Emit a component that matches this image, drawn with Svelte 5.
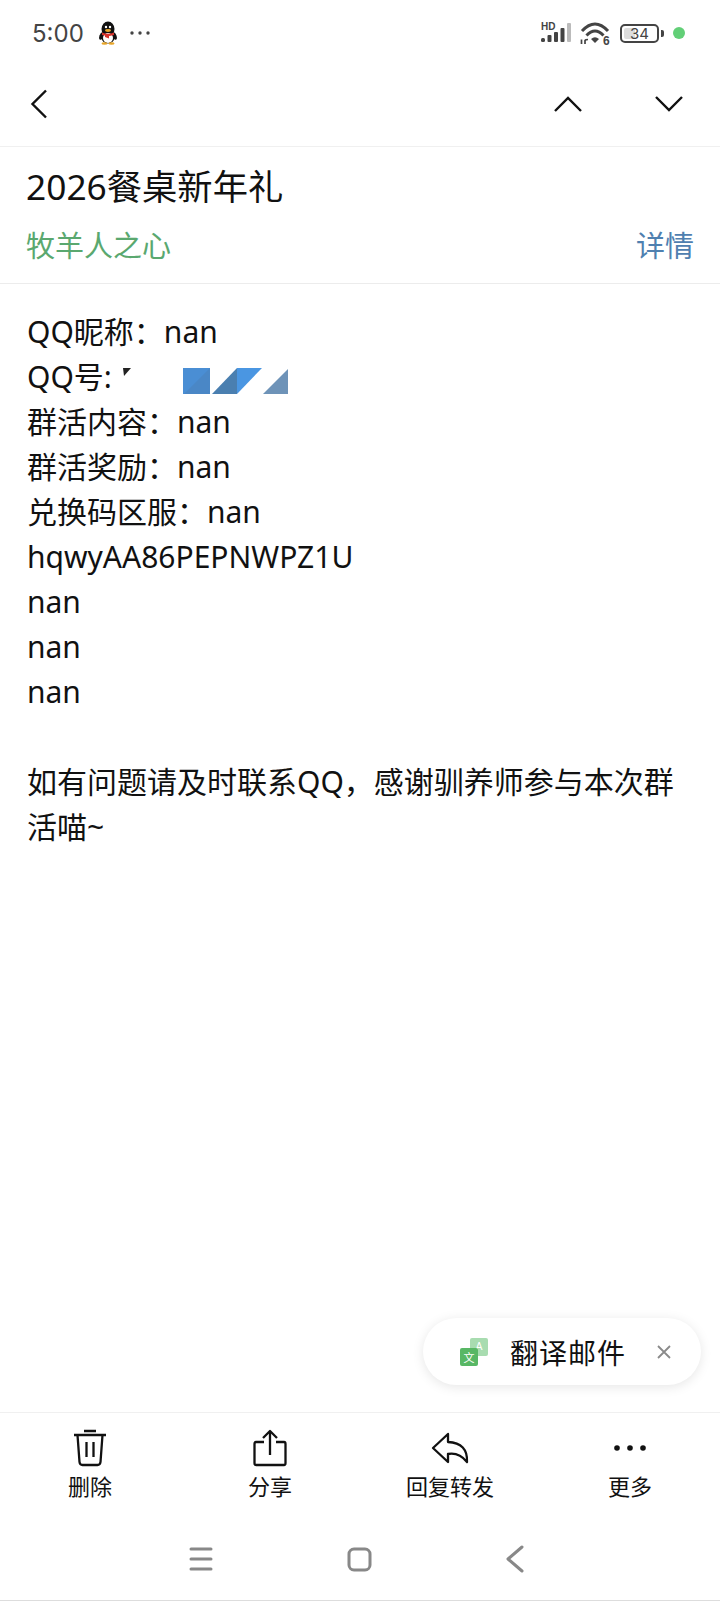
<script lang="ts">
	const bodyLines = [
		'QQ昵称：nan',
		'QQ号:',
		'群活内容：nan',
		'群活奖励：nan',
		'兑换码区服：nan',
		'hqwyAA86PEPNWPZ1U',
		'nan',
		'nan',
		'nan'
	];
</script>

<div class="page">
	<div class="status">
		<span class="time">5:00</span>
		<svg class="qq" width="20" height="24" viewBox="0 0 20 24">
			<ellipse cx="3.5" cy="15" rx="2" ry="4" fill="#111" transform="rotate(20 3.5 15)" />
			<ellipse cx="16.5" cy="15" rx="2" ry="4" fill="#111" transform="rotate(-20 16.5 15)" />
			<ellipse cx="10" cy="8" rx="6.5" ry="7.5" fill="#111" />
			<ellipse cx="10" cy="16.5" rx="6.5" ry="6" fill="#111" />
			<ellipse cx="10" cy="17" rx="5" ry="5" fill="#fff" />
			<path d="M4 11.5 Q10 14 16 11.5 L16 14 Q12 15 11 15 L11 17.5 L7 16 L7 14.5 Q5 14 4 14Z" fill="#d8342c" />
			<ellipse cx="10" cy="9.5" rx="3" ry="1.4" fill="#e8a62a" />
			<circle cx="8" cy="6" r="1.2" fill="#fff" />
			<circle cx="12" cy="6" r="1.2" fill="#fff" />
			<ellipse cx="6.5" cy="22.5" rx="3" ry="1.2" fill="#e8a62a" />
			<ellipse cx="13.5" cy="22.5" rx="3" ry="1.2" fill="#e8a62a" />
		</svg>
		<svg class="dots" width="20" height="4" viewBox="0 0 20 4" fill="#444">
			<circle cx="2" cy="2" r="1.7" /><circle cx="10" cy="2" r="1.7" /><circle cx="18" cy="2" r="1.7" />
		</svg>
		<span class="spacer"></span>
		<svg width="33" height="24" viewBox="0 0 33 24">
			<text x="2" y="9" font-size="10" font-weight="700" font-family="Liberation Sans, sans-serif" fill="#444">HD</text>
			<rect x="2" y="17" width="4" height="4" rx="1.5" fill="#444" />
			<rect x="8.5" y="14" width="4" height="7" rx="1" fill="#444" />
			<rect x="15" y="11" width="4" height="10" rx="1" fill="#444" />
			<rect x="21.5" y="7" width="4" height="14" rx="1" fill="#444" />
			<rect x="28" y="2" width="4" height="19" rx="1" fill="#bbb" />
		</svg>
		<svg class="wifi" width="31" height="32" viewBox="0 -4 31 32" fill="none" stroke="#444" stroke-width="3">
			<path d="M2 10 Q15 -4 28 10" />
			<path d="M6.5 14.5 Q15 5.5 23.5 14.5" />
			<path d="M11 18 Q15 14.5 19 18 L15 22Z" fill="#444" stroke="none" />
			<path d="M1.5 23 L1.5 18.5 M5 23 L5 19.5 Q5.5 18.5 8 18.5" stroke-width="1.7" />
			<text x="23" y="23.5" font-size="12" font-weight="700" font-family="Liberation Sans, sans-serif" fill="#444" stroke="none">6</text>
		</svg>
		<div class="battery">
			<div class="cell"><span class="fill"></span><span class="level">34</span></div>
			<span class="cap"></span>
		</div>
		<span class="led"></span>
	</div>

	<div class="nav">
		<svg width="18" height="30" viewBox="0 0 18 30" fill="none" stroke="#111" stroke-width="2.4">
			<path d="M16 1.5 L2.5 15 L16 28.5" />
		</svg>
		<span class="spacer"></span>
		<svg width="30" height="16" viewBox="0 0 30 16" fill="none" stroke="#111" stroke-width="2.4">
			<path d="M2 15 L15 2 L28 15" />
		</svg>
		<svg class="next" width="30" height="16" viewBox="0 0 30 16" fill="none" stroke="#111" stroke-width="2.4">
			<path d="M2 1 L15 14 L28 1" />
		</svg>
	</div>

	<header class="head">
		<h1>2026餐桌新年礼</h1>
		<div class="meta">
			<span class="sender">牧羊人之心</span>
			<span class="detail">详情</span>
		</div>
	</header>

	<main class="body">
		{#each bodyLines as line}
			<div class="line">
				{line}
				{#if line === 'QQ号:'}
					<svg class="masked" width="170" height="26" viewBox="0 0 170 26">
						<path d="M1 0 L9 0 L2 8Z" fill="#222" />
						<rect x="61" y="0" width="27" height="26" fill="#4a8ed4" />
						<path d="M88 0 L88 26 L62 26Z" fill="#4a7fb8" opacity="0.5" />
						<path d="M90 26 L115 0 L115 26Z" fill="#4a7fb0" />
						<path d="M115 0 L140 0 L115 26Z" fill="#4a96e2" />
						<path d="M141 26 L166 1 L166 26Z" fill="#6e93b8" />
					</svg>
				{/if}
			</div>
		{/each}
		<div class="line blank"></div>
		<div class="line">如有问题请及时联系QQ，感谢驯养师参与本次群</div>
		<div class="line">活喵~</div>
	</main>

	<div class="translate">
		<svg width="30" height="30" viewBox="0 0 30 30">
			<rect x="11" y="1" width="18" height="18" rx="2" fill="#a8dcb0" />
			<text x="20" y="13" text-anchor="middle" font-size="10" font-family="Liberation Sans, sans-serif" fill="#fff">A</text>
			<rect x="1" y="11" width="18" height="18" rx="2" fill="#58b765" />
			<text x="10" y="24.5" text-anchor="middle" font-size="11" font-family="Noto Sans CJK SC, sans-serif" fill="#fff">文</text>
		</svg>
		<span class="translate-label">翻译邮件</span>
		<svg width="14" height="14" viewBox="0 0 14 14" stroke="#8a8a8a" stroke-width="1.8">
			<path d="M1 1 L13 13 M13 1 L1 13" />
		</svg>
	</div>

	<footer class="actions">
		<div class="action">
			<svg width="34" height="38" viewBox="0 0 34 38" fill="none" stroke="#111" stroke-width="2.3" stroke-linejoin="round">
				<path d="M1 6 L33 6 M11 2 L23 2" />
				<path d="M4.5 6 L6.5 33 Q6.8 36 9.5 36 L24.5 36 Q27.2 36 27.5 33 L29.5 6" />
				<path d="M13.5 13 L13.5 28 M20.5 13 L20.5 28" />
			</svg>
			<span>删除</span>
		</div>
		<div class="action">
			<svg width="34" height="38" viewBox="0 0 34 38" fill="none" stroke="#111" stroke-width="2.3" stroke-linejoin="round">
				<path d="M11 13 L3 13 Q1.5 13 1.5 15 L1.5 34 Q1.5 36 3 36 L31 36 Q32.5 36 32.5 34 L32.5 15 Q32.5 13 31 13 L23 13" />
				<path d="M17 26 L17 2 M10 9 L17 2 L24 9" />
			</svg>
			<span>分享</span>
		</div>
		<div class="action">
			<svg width="40" height="34" viewBox="0 0 40 34" fill="none" stroke="#111" stroke-width="2.3" stroke-linejoin="round">
				<path d="M18 3 L3 17 L18 31 L18 23 Q29 21 37 31 Q38 12 18 11Z" />
			</svg>
			<span>回复转发</span>
		</div>
		<div class="action">
			<svg width="34" height="38" viewBox="0 0 34 38" fill="#111">
				<circle cx="4" cy="19" r="2.8" /><circle cx="17" cy="19" r="2.8" /><circle cx="30" cy="19" r="2.8" />
			</svg>
			<span>更多</span>
		</div>
	</footer>

	<div class="sysnav">
		<svg width="24" height="24" viewBox="0 0 24 24" stroke="#888" stroke-width="3" stroke-linecap="round">
			<path d="M2 2 L22 2 M2 12 L22 12 M2 22 L22 22" />
		</svg>
		<svg width="25" height="25" viewBox="0 0 25 25" fill="none" stroke="#888" stroke-width="3">
			<rect x="2" y="2" width="21" height="21" rx="5" />
		</svg>
		<svg width="18" height="28" viewBox="0 0 18 28" fill="none" stroke="#888" stroke-width="3" stroke-linecap="round" stroke-linejoin="round">
			<path d="M16 2 L2 14 L16 26" />
		</svg>
	</div>
	<div class="edge"></div>
</div>

<style>
	:global(body) {
		margin: 0;
		background: #fff;
	}

	.page {
		position: relative;
		display: flex;
		flex-direction: column;
		width: 720px;
		height: 1601px;
		overflow: hidden;
		background: #fff;
		color: #111;
		font-family: "Noto Sans", "Noto Sans CJK SC", sans-serif;
	}

	.spacer {
		flex: 1;
	}

	.status {
		display: flex;
		align-items: center;
		height: 66px;
		padding: 0 35px 0 32px;
		box-sizing: border-box;
		color: #444;
	}

	.time {
		font-family: Inter, sans-serif;
		font-size: 24px;
		margin-right: 14px;
	}

	.dots {
		margin-left: 12px;
	}

	.wifi {
		margin-left: 8px;
	}

	.battery {
		display: flex;
		align-items: center;
		margin-left: 9px;
		gap: 2px;
	}

	.cell {
		position: relative;
		width: 35px;
		height: 15px;
		border: 2px solid #444;
		border-radius: 5px;
		display: flex;
		align-items: center;
		justify-content: center;
	}

	.fill {
		position: absolute;
		left: 2px;
		top: 2px;
		bottom: 2px;
		width: 11px;
		background: #ddd;
		border-radius: 2px;
	}

	.level {
		position: relative;
		font-family: Inter, sans-serif;
		font-size: 15px;
		line-height: 1;
		color: #444;
	}

	.cap {
		width: 3px;
		height: 7px;
		background: #444;
		border-radius: 0 2px 2px 0;
	}

	.led {
		width: 12px;
		height: 12px;
		margin-left: 9px;
		border-radius: 50%;
		background: #62cf77;
	}

	.nav {
		display: flex;
		align-items: center;
		height: 81px;
		padding: 0 36px 5px 30px;
		box-sizing: border-box;
		border-bottom: 1px solid #f0f0f0;
	}

	.next {
		margin-left: 71px;
	}

	.head {
		padding: 12px 26px 0 26px;
		height: 137px;
		box-sizing: border-box;
		border-bottom: 1px solid #ececec;
	}

	h1 {
		margin: 0;
		font-size: 35.3px;
		font-weight: 400;
		line-height: 54px;
	}

	.meta {
		display: flex;
		justify-content: space-between;
		align-items: center;
		margin-top: 12px;
		font-size: 29px;
		line-height: 42px;
	}

	.sender {
		color: #5aa86f;
	}

	.detail {
		color: #4f80b0;
	}

	.body {
		flex: 1;
		padding: 25px 30px 0 27px;
		font-size: 30px;
		line-height: 45px;
	}

	.line {
		position: relative;
		height: 45px;
		white-space: nowrap;
	}

	.masked {
		position: absolute;
		left: 95px;
		top: 14px;
	}

	.translate {
		position: absolute;
		left: 423px;
		top: 1318px;
		width: 278px;
		height: 67px;
		display: flex;
		align-items: center;
		padding: 0 30px 0 36px;
		box-sizing: border-box;
		background: #fff;
		border-radius: 34px;
		box-shadow: 0 2px 12px rgba(0, 0, 0, 0.1);
	}

	.translate-label {
		flex: 1;
		margin-left: 21px;
		font-size: 28px;
		letter-spacing: 1px;
	}

	.actions {
		display: grid;
		grid-template-columns: repeat(4, 180px);
		height: 105px;
		padding-top: 16px;
		box-sizing: border-box;
		border-top: 1px solid #f0f0f0;
	}

	.action {
		display: flex;
		flex-direction: column;
		align-items: center;
		font-size: 22px;
		line-height: 30px;
	}

	.action svg {
		height: 38px;
		margin-bottom: 4px;
	}

	.sysnav {
		display: flex;
		align-items: center;
		gap: 134px;
		height: 84px;
		padding-left: 189px;
		box-sizing: border-box;
	}

	.edge {
		position: absolute;
		left: 0;
		right: 0;
		bottom: 0;
		height: 1px;
		background: #ddd;
	}
</style>
